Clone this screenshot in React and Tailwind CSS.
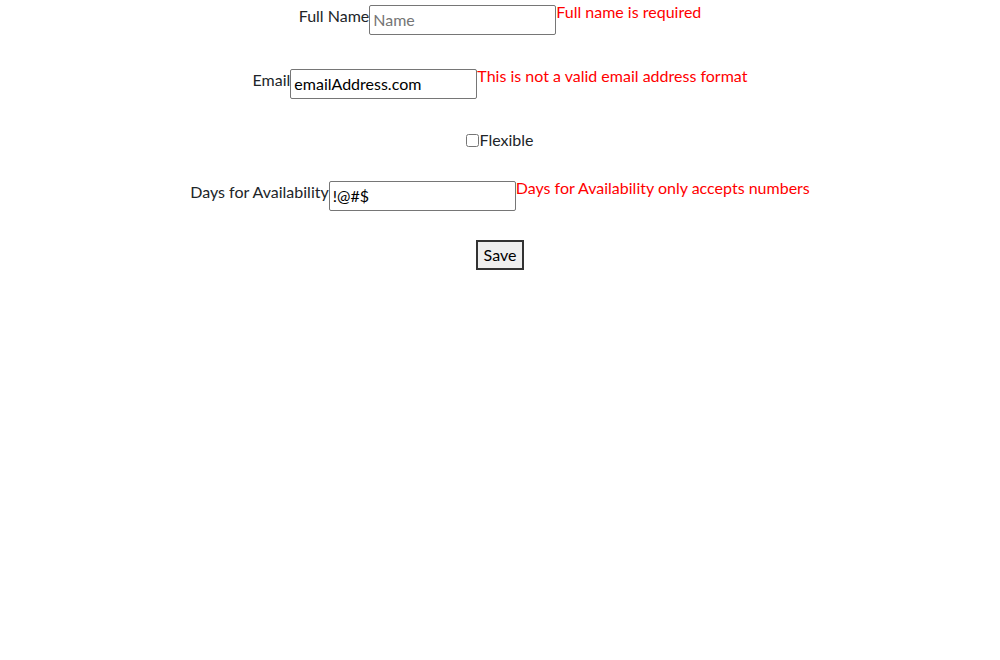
export default function App() {
  return (
    <div className="w-[1000px] h-[660px] bg-white text-[16px] text-[#212529] font-['Lato','Liberation_Sans',sans-serif]">
      <div className="flex flex-col pt-[5px]">
        <div className="flex justify-center items-start h-[30px]">
          <label className="leading-5 mt-[1px]">Full Name</label>
          <input placeholder="Name" className="w-[187px] h-[30px] border border-[#767676] rounded-[2px] px-[3px] pb-[2px] text-[16px] text-black placeholder:text-[#757575] outline-none" />
          <span className="leading-5 mt-[-3px] text-[#ff0000]">Full name is required</span>
        </div>
        <div className="flex justify-center items-start h-[30px] mt-[34px]">
          <label className="leading-5 mt-[1px]">Email</label>
          <input defaultValue="emailAddress.com" className="w-[187px] h-[30px] border border-[#767676] rounded-[2px] px-[3px] pb-[2px] text-[16px] text-black outline-none" />
          <span className="leading-5 mt-[-3px] text-[#ff0000]">This is not a valid email address format</span>
        </div>
        <div className="flex justify-center items-center h-[20px] mt-[31px]">
          <input type="checkbox" className="w-[13px] h-[13px] m-0" />
          <label className="leading-5">Flexible</label>
        </div>
        <div className="flex justify-center items-start h-[30px] mt-[31px]">
          <label className="leading-5 mt-[1px]">Days for Availability</label>
          <input defaultValue="!@#$" className="w-[187px] h-[30px] border border-[#767676] rounded-[2px] px-[3px] pb-[2px] text-[16px] text-black outline-none" />
          <span className="leading-5 mt-[-3px] text-[#ff0000]">Days for Availability only accepts numbers</span>
        </div>
        <div className="flex justify-center mt-[29px]">
          <button className="w-[48px] h-[30px] border-2 border-[#333] bg-[#efefef] text-black text-[16px] leading-5">Save</button>
        </div>
      </div>
    </div>
  );
}
